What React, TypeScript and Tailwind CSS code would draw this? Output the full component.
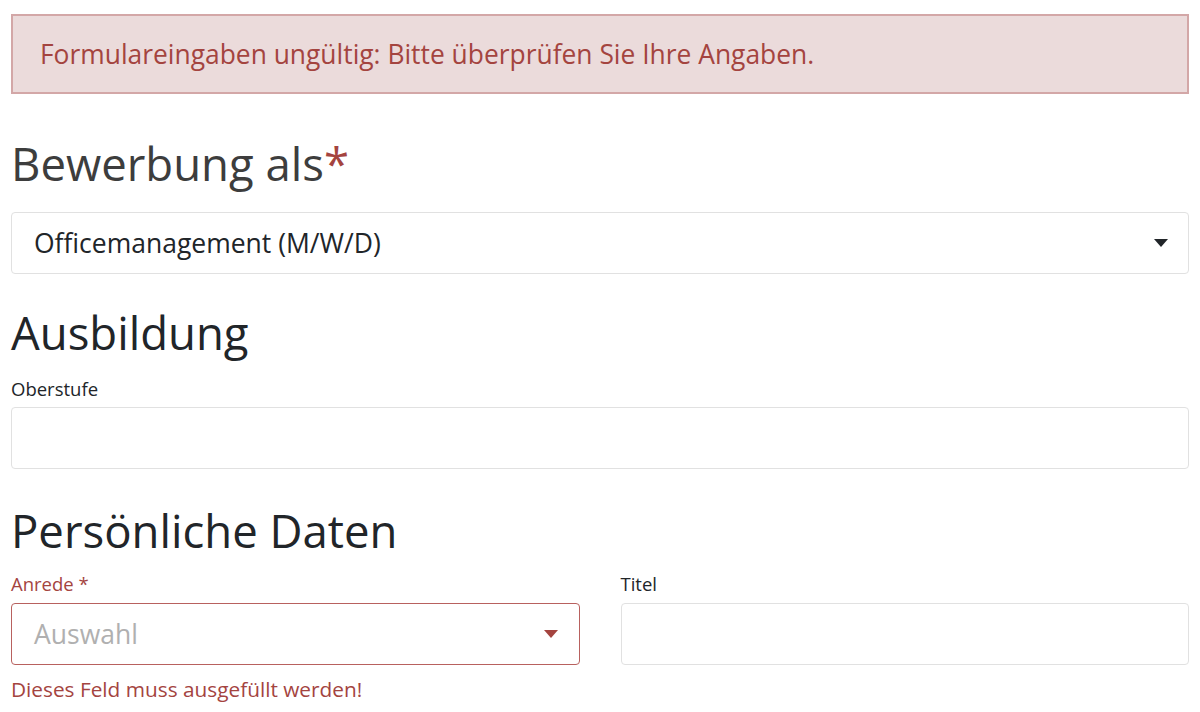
import React from "react";

const Caret = ({ color }: { color: string }) => (
  <svg width="14" height="8" viewBox="0 0 14 8" className="shrink-0">
    <path d="M0 0 L14 0 L7 8 Z" fill={color} />
  </svg>
);

export default function App() {
  return (
    <div
      className="w-[1200px] h-[712px] overflow-hidden bg-white px-[11px] pt-[14px]"
      style={{ fontFamily: '"Open Sans", "Noto Sans", sans-serif' }}
    >
      <div className="border-2 border-[#d3a7a7] bg-[#ebdbdb] pl-[27px] py-[20px] text-[26.4px] leading-[36px] text-[#a4443f]">
        Formulareingaben ungültig: Bitte überprüfen Sie Ihre Angaben.
      </div>

      <h2 className="mt-[42px] text-[45.5px] leading-[54px] text-[#3d3d3d]">
        Bewerbung als<span className="text-[#a4443f]">*</span>
      </h2>

      <div className="mt-[22px] h-[62px] flex items-center justify-between rounded-[4px] border border-[#e1e1e1] pl-[22px] pr-[20px] text-[26.5px] leading-[36px] text-[#212529]">
        <span>Officemanagement (M/W/D)</span>
        <Caret color="#212529" />
      </div>

      <h2 className="mt-[31px] text-[45.5px] leading-[54px] text-[#212529]">Ausbildung</h2>

      <div className="mt-[16px] text-[18.5px] leading-[27px] text-[#212529]">Oberstufe</div>
      <div className="mt-[5px] h-[62px] rounded-[4px] border border-[#e1e1e1]" />

      <h2 className="mt-[34px] text-[45.5px] leading-[54px] text-[#212529]">Persönliche Daten</h2>

      <div className="mt-[13px] grid grid-cols-2 gap-x-[41px]">
        <div>
          <div className="text-[18.5px] leading-[27px] text-[#a4443f]">Anrede *</div>
          <div className="mt-[6px] h-[62px] flex items-center justify-between rounded-[4px] border border-[#b8615e] pl-[22px] pr-[21px] text-[26.5px] leading-[36px] text-[#b0b0b0]">
            <span>Auswahl</span>
            <Caret color="#a4443f" />
          </div>
          <div className="mt-[9px] text-[20.8px] leading-[30px] text-[#a4443f]">
            Dieses Feld muss ausgefüllt werden!
          </div>
        </div>
        <div>
          <div className="text-[18.5px] leading-[27px] text-[#212529]">Titel</div>
          <div className="mt-[6px] h-[62px] rounded-[4px] border border-[#e1e1e1]" />
        </div>
      </div>
    </div>
  );
}
